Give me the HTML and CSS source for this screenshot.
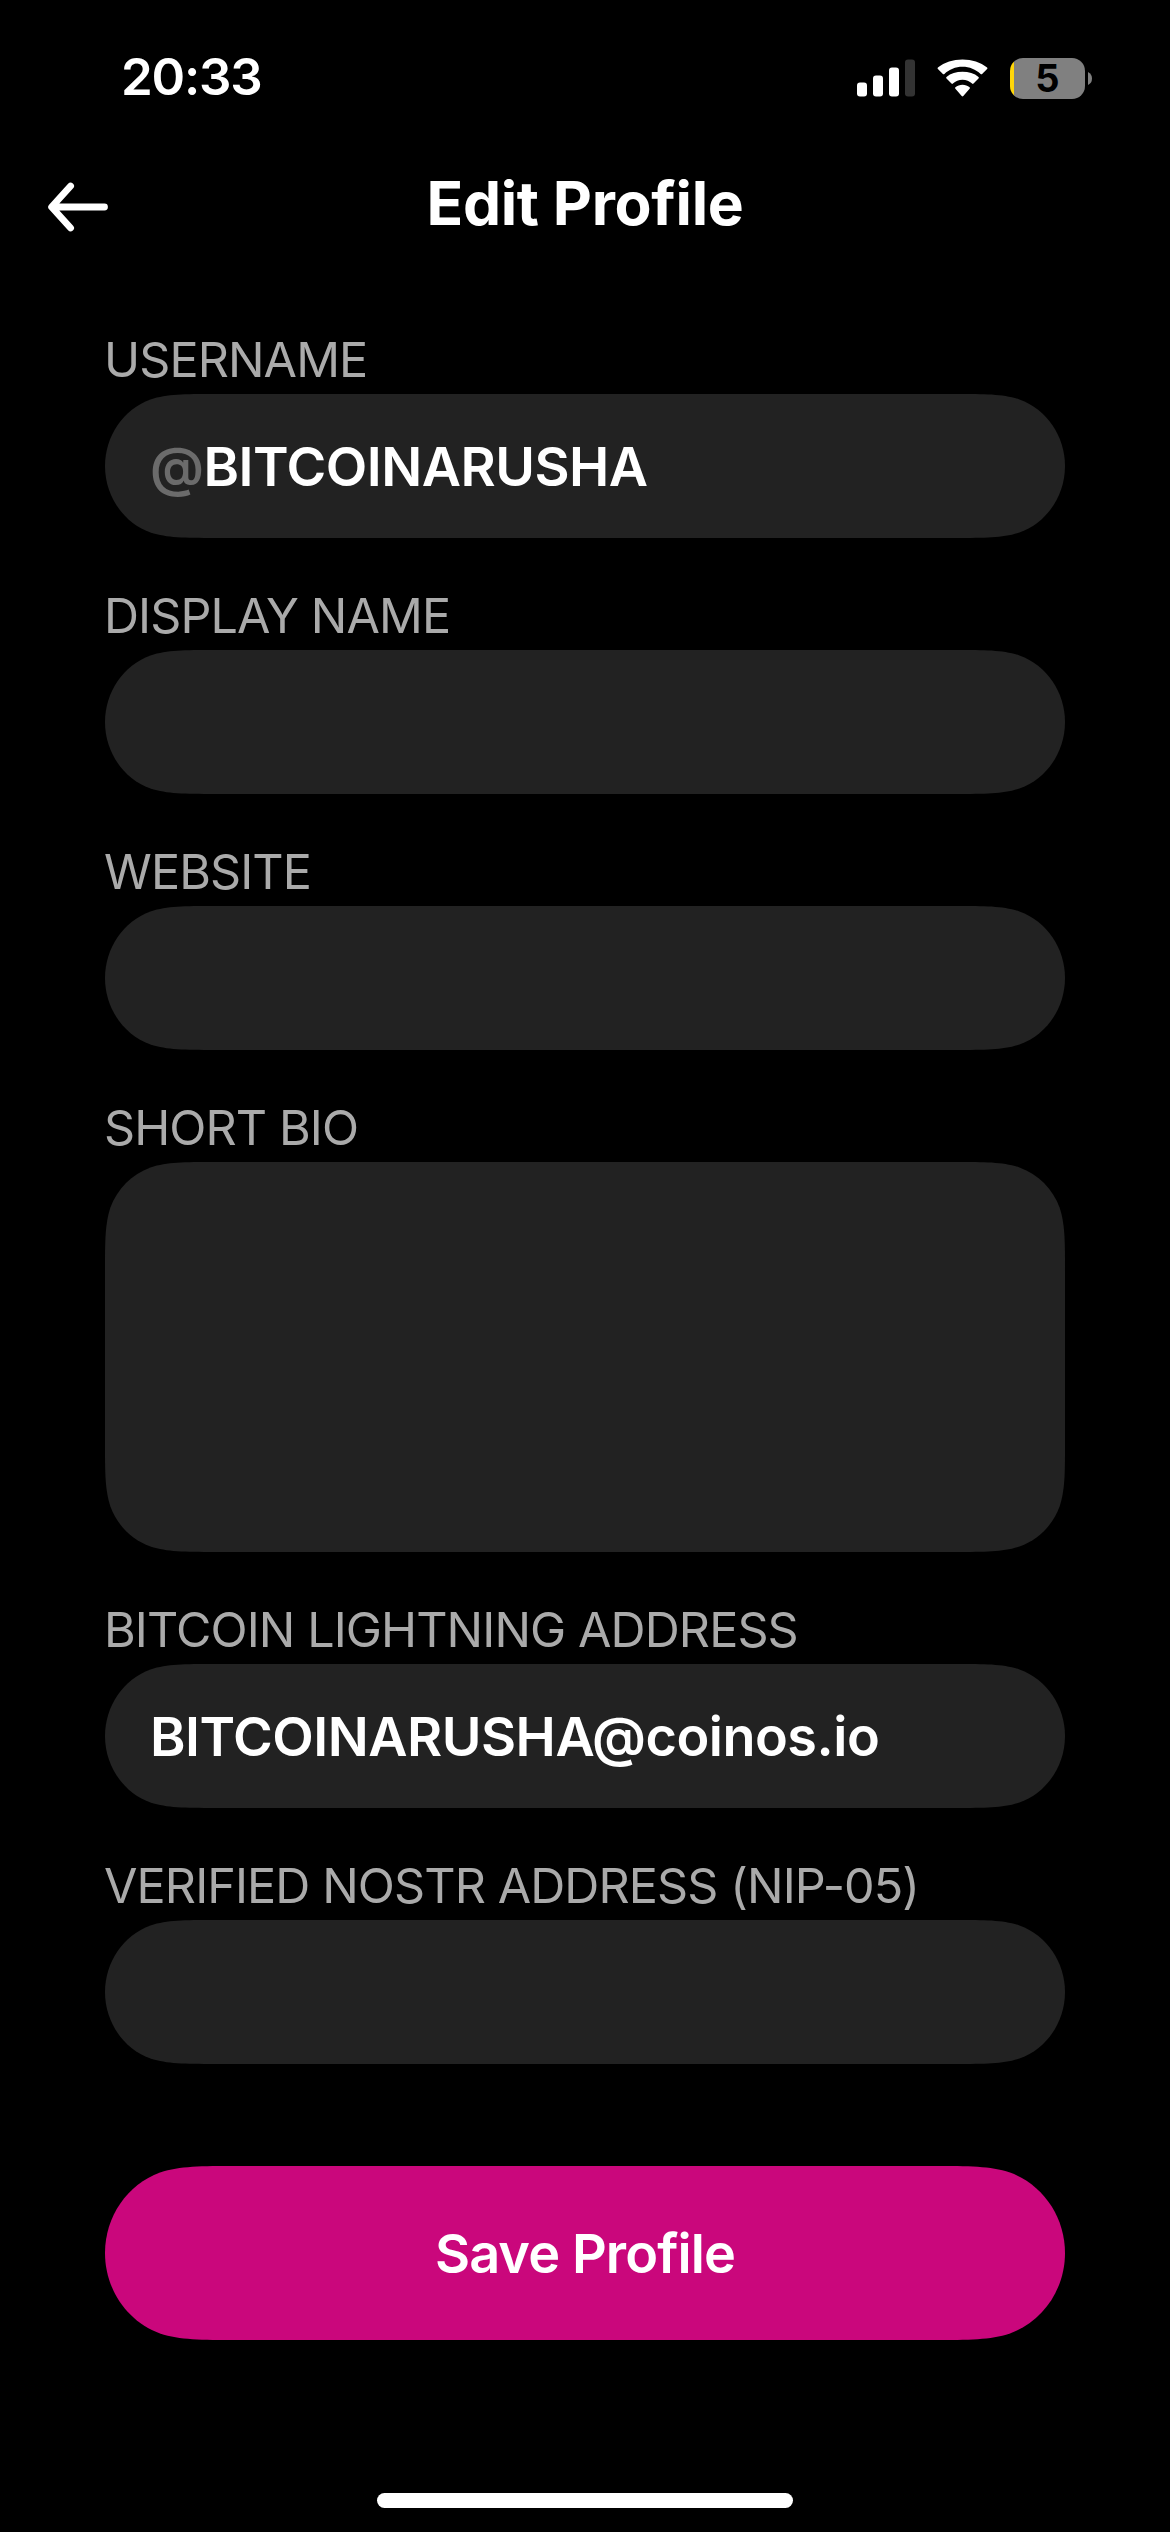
FILE: index.html
```html
<!DOCTYPE html>
<html lang="en">

<head>
    <meta charset="UTF-8">
    <meta name="viewport" content="width=device-width, initial-scale=1.0">
    <title>Edit Profile</title>
    <link rel="stylesheet" href="styles.css">
</head>

<body>

    <div class="status-bar">
        <span class="time">20:33</span>
        <div class="status-icons">
            <svg class="signal" width="58" height="38" viewBox="0 0 58 38" fill="#fff">
                <rect x="0" y="23.5" width="10" height="14" rx="3" />
                <rect x="16" y="16.5" width="10" height="21" rx="3" />
                <rect x="32" y="8.5" width="10" height="29" rx="3" />
                <rect x="48" y="0.5" width="10" height="37" rx="3" fill="#333" />
            </svg>
            <svg class="wifi" width="51" height="38" viewBox="0 0 51 38" fill="#fff">
                <path d="M25.5 7.8c7 0 13.3 2.7 18.1 7.2q.8.7 1.5 0l5-5q.8-.8 0-1.5C43.5 3.2 34.9.5 25.5.5S7.5 3.2.9 8.5q-.8.7 0 1.5l5 5q.7.7 1.5 0C12.2 10.5 18.5 7.8 25.5 7.8z" />
                <path d="M25.5 20.7c3.7 0 7 1.5 9.6 3.9q.7.7 1.4 0l5-5q.8-.8 0-1.6c-4.200-3.600-9.800-5.200-16-5.200s-11.800 1.600-16 5.200q-.8.8 0 1.600l5 5q.7.7 1.400 0c2.600-2.400 5.900-3.900 9.600-3.900z" />
                <path d="M25.5 25.8c2.7 0 5.2 1 7.1 2.5q.8.7 0 1.5l-6.3 7.200q-.8.8-1.600 0l-6.300-7.200q-.8-.8 0-1.500c1.900-1.500 4.400-2.500 7.100-2.500z" />
            </svg>
            <div class="battery">
                <div class="battery-body">5</div>
                <svg width="4" height="13" viewBox="0 0 4 13" fill="#808080">
                    <path d="M0 0q4 2 4 6.500T0 13z" />
                </svg>
            </div>
        </div>
    </div>

    <header class="nav-bar">
        <svg class="back" width="60" height="50" viewBox="0 0 60 50" fill="none" stroke="#fff" stroke-width="6.8" stroke-linecap="round" stroke-linejoin="round">
            <path d="M56.5 25H4M22.6 4L3.6 25l19 21" />
        </svg>
        <h1>Edit Profile</h1>
    </header>

    <form class="profile-form">
        <div class="group">
            <label for="username">USERNAME</label>
            <div class="field">
                <span class="at">@</span>
                <input id="username" type="text" value="BITCOINARUSHA">
            </div>
        </div>
        <div class="group">
            <label for="display-name">DISPLAY NAME</label>
            <div class="field"><input id="display-name" type="text"></div>
        </div>
        <div class="group">
            <label for="website">WEBSITE</label>
            <div class="field"><input id="website" type="text"></div>
        </div>
        <div class="group">
            <label for="bio">SHORT BIO</label>
            <div class="field bio"><textarea id="bio"></textarea></div>
        </div>
        <div class="group">
            <label for="lightning">BITCOIN LIGHTNING ADDRESS</label>
            <div class="field"><input id="lightning" type="text" value="BITCOINARUSHA@coinos.io"></div>
        </div>
        <div class="group">
            <label for="nip05">VERIFIED NOSTR ADDRESS (NIP-05)</label>
            <div class="field"><input id="nip05" type="text"></div>
        </div>
        <button class="save-button" type="button">Save Profile</button>
    </form>

    <div class="home-indicator"></div>

</body>

</html>
```
FILE: styles.css
```css
* {
    box-sizing: border-box;
}

body {
    margin: 0;
    height: 2532px;
    background-color: #000;
    color: #fff;
    font-family: Inter, "Liberation Sans", sans-serif;
    display: flex;
    flex-direction: column;
    overflow: hidden;
}

.status-bar {
    height: 156px;
    padding: 0 78px 0 121px;
    display: flex;
    justify-content: space-between;
    align-items: center;
}

.time {
    font-size: 51px;
    font-weight: 600;
    line-height: 60px;
    letter-spacing: -1.2px;
    padding-bottom: 2px;
}

.status-icons {
    display: flex;
    align-items: center;
}

.wifi {
    margin-left: 22px;
}

.battery {
    margin-left: 22px;
    display: flex;
    align-items: center;
    gap: 3px;
}

.battery-body {
    width: 75px;
    height: 41px;
    border-radius: 13px;
    background: linear-gradient(to right, #ffd60a 4px, #808080 4px);
    color: #000;
    font-size: 38px;
    font-weight: 700;
    line-height: 41px;
    text-align: center;
}

.nav-bar {
    height: 170px;
    padding: 0 48px;
    display: grid;
    grid-template-columns: 60px 1fr 60px;
}

.back {
    margin-top: 26px;
}

h1 {
    margin: 0;
    font-size: 60.5px;
    font-weight: 700;
    line-height: 94px;
    letter-spacing: -0.3px;
    text-align: center;
}

.profile-form {
    width: 960px;
    margin: 0 auto;
    display: flex;
    flex-direction: column;
    gap: 44px;
}

label {
    display: block;
    height: 68px;
    margin-left: -1px;
    line-height: 68px;
    font-size: 48.5px;
    letter-spacing: -0.9px;
    color: #aaa;
    white-space: nowrap;
}

.field {
    height: 144px;
    padding: 0 45px;
    display: flex;
    align-items: center;
    background-color: #222;
    clip-path: path("M110 0H850C881.6 0 897.5 0 914.5 5.4C941.7 15.3 960 42 960 72C960 102 941.7 128.7 914.5 138.6C897.5 144 881.6 144 850 144H110C78.4 144 62.5 144 45.5 138.6C18.3 128.7 0 102 0 72C0 42 18.3 15.3 45.5 5.4C62.5 0 78.4 0 110 0Z");
}

.field.bio {
    height: 390px;
    clip-path: path("M110 0H850C881.6 0 897.5 0 914.5 5.4C933.2 12.2 947.8 26.8 954.6 45.5C960 62.5 960 78.4 960 110V280C960 311.6 960 327.5 954.6 344.5C947.8 363.2 933.2 377.8 914.5 384.6C897.5 390 881.6 390 850 390H110C78.4 390 62.5 390 45.5 384.6C26.8 377.8 12.2 363.2 5.4 344.5C0 327.5 0 311.6 0 280V110C0 78.4 0 62.5 5.4 45.5C12.2 26.8 26.8 12.2 45.5 5.4C62.5 0 78.4 0 110 0Z");
}

.field input,
.field textarea {
    flex: 1;
    min-width: 0;
    height: 100%;
    padding: 0;
    border: none;
    outline: none;
    resize: none;
    background: none;
    color: #fff;
    font-family: inherit;
    font-size: 54px;
    font-weight: 600;
    letter-spacing: -0.5px;
}

.at {
    color: #6b6b6b;
    font-size: 54px;
    font-weight: 600;
    letter-spacing: -0.5px;
}

.save-button {
    height: 174px;
    margin-top: 58px;
    padding: 0;
    border: none;
    background-color: #ca077c;
    color: #fff;
    font-family: inherit;
    font-size: 54px;
    font-weight: 600;
    letter-spacing: -0.9px;
    clip-path: path("M133 0H827C865.3 0 884.4 0 905 6.5C937.9 18.5 960 50.8 960 87C960 123.2 937.9 155.5 905 167.5C884.4 174 865.3 174 827 174H133C94.7 174 75.6 174 55 167.5C22.1 155.5 0 123.2 0 87C0 50.8 22.1 18.5 55 6.5C75.6 0 94.7 0 133 0Z");
}

.home-indicator {
    width: 416px;
    height: 15px;
    margin: auto auto 24px;
    border-radius: 8px;
    background-color: #fff;
}
```
